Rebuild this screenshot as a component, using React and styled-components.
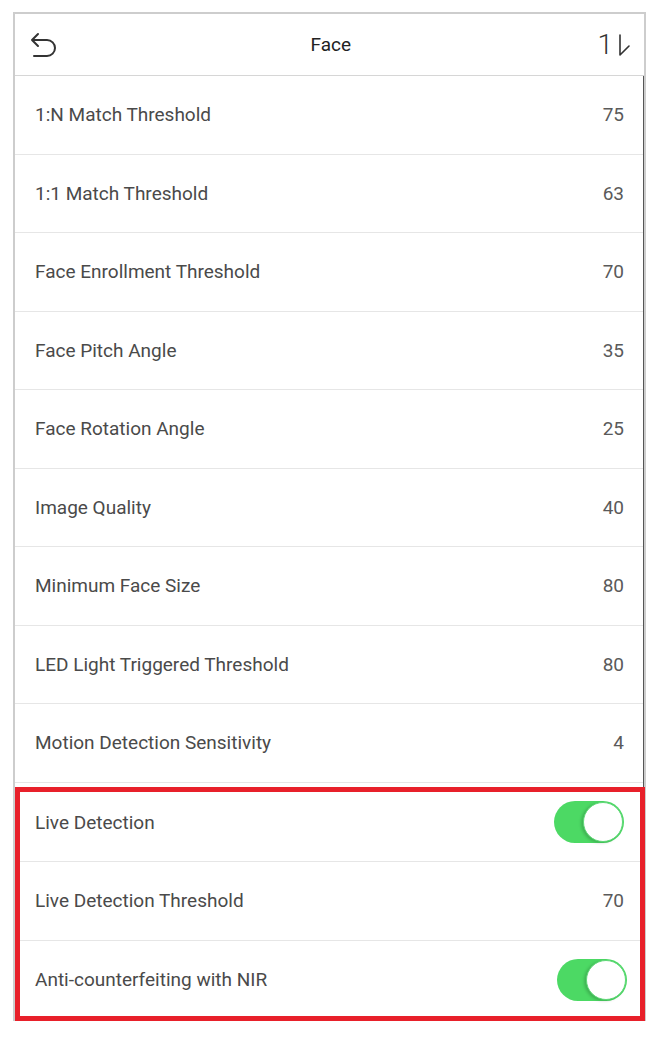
import React from "react";
import styled, { createGlobalStyle } from "styled-components";

const GlobalStyle = createGlobalStyle`
  html, body {
    margin: 0;
    padding: 0;
    background: #ffffff;
    font-family: Roboto, "Liberation Sans", Arial, sans-serif;
  }
`;

const rows = [
  { label: "1:N Match Threshold", value: "75" },
  { label: "1:1 Match Threshold", value: "63" },
  { label: "Face Enrollment Threshold", value: "70" },
  { label: "Face Pitch Angle", value: "35" },
  { label: "Face Rotation Angle", value: "25" },
  { label: "Image Quality", value: "40" },
  { label: "Minimum Face Size", value: "80" },
  { label: "LED Light Triggered Threshold", value: "80" },
  { label: "Motion Detection Sensitivity", value: "4" },
];

const highlighted = [
  { label: "Live Detection", toggle: true, shift: 0 },
  { label: "Live Detection Threshold", value: "70" },
  { label: "Anti-counterfeiting with NIR", toggle: true, shift: 3 },
];

const BackIcon = () => (
  <svg width="30" height="26" viewBox="0 0 30 26" fill="none">
    <path
      d="M8 2 L2 8 L8 14 M2 8 H17 a8 8 0 0 1 0 16 H4"
      stroke="#333"
      strokeWidth="2"
      strokeLinecap="round"
      strokeLinejoin="round"
    />
  </svg>
);

const SortIcon = () => (
  <SortWrap>
    <SortOne>1</SortOne>
    <svg width="12" height="24" viewBox="0 0 12 24" fill="none">
      <path
        d="M2 2 V22 L11 13"
        stroke="#333"
        strokeWidth="1.6"
        strokeLinecap="round"
        strokeLinejoin="round"
      />
    </svg>
  </SortWrap>
);

const App = () => {
  return (
    <>
      <GlobalStyle />
      <Frame>
        <Header>
          <BackIcon />
          <Title>Face</Title>
          <SortIcon />
        </Header>
        <List>
          {rows.map((r) => (
            <Row key={r.label}>
              <Label>{r.label}</Label>
              <Value>{r.value}</Value>
            </Row>
          ))}
          <Highlight>
            {highlighted.map((r) => (
              <Row key={r.label}>
                <Label>{r.label}</Label>
                {r.toggle ? (
                  <Toggle $shift={r.shift}>
                    <Knob />
                  </Toggle>
                ) : (
                  <Value>{r.value}</Value>
                )}
              </Row>
            ))}
          </Highlight>
        </List>
      </Frame>
    </>
  );
};

export default App;

const Frame = styled.div`
  margin: 12px 0 0 13px;
  width: 633px;
  box-sizing: border-box;
  border-top: 2px solid #cdcdcd;
  border-left: 2px solid #cdcdcd;
  border-right: 2px solid #cdcdcd;
  background: #fff;
`;

const Header = styled.div`
  height: 61px;
  display: flex;
  align-items: center;
  justify-content: space-between;
  padding: 0 14px 0 15px;
  border-bottom: 1px solid #d6d6d6;
`;

const Title = styled.span`
  font-size: 19px;
  color: #222;
  margin-left: 4px;
`;

const SortWrap = styled.div`
  display: flex;
  align-items: center;
  gap: 5px;
  color: #333;
`;

const SortOne = styled.span`
  font-size: 28px;
  font-weight: 300;
  line-height: 1;
`;

const List = styled.div`
  border-right: 1px solid #555;
`;

const Row = styled.div`
  height: 78.5px;
  box-sizing: border-box;
  display: flex;
  align-items: center;
  justify-content: space-between;
  padding: 0 19px 0 20px;
  border-bottom: 1px solid #e6e6e6;
  &:last-child {
    border-bottom: none;
  }
`;

const Label = styled.span`
  font-size: 19px;
  color: #4a4a4a;
`;

const Value = styled.span`
  font-size: 19px;
  color: #5a5a5a;
`;

const Highlight = styled.div`
  position: relative;
  padding-top: 1px;
  padding-bottom: 2px;
  &::after {
    content: "";
    position: absolute;
    top: 4px;
    left: 0;
    right: -2px;
    bottom: 0;
    border: 5px solid #e8202a;
    pointer-events: none;
  }
`;

const Toggle = styled.div`
  width: 70px;
  height: 42px;
  border-radius: 21px;
  background: #4cd964;
  display: flex;
  align-items: center;
  justify-content: flex-end;
  margin-right: ${(p) => -p.$shift}px;
`;

const Knob = styled.div`
  width: 40px;
  height: 40px;
  border-radius: 50%;
  background: #fff;
  border: 1.5px solid #5fd877;
  box-sizing: border-box;
  box-shadow: -2px 1px 3px rgba(0, 0, 0, 0.18);
  margin-right: 1px;
`;
